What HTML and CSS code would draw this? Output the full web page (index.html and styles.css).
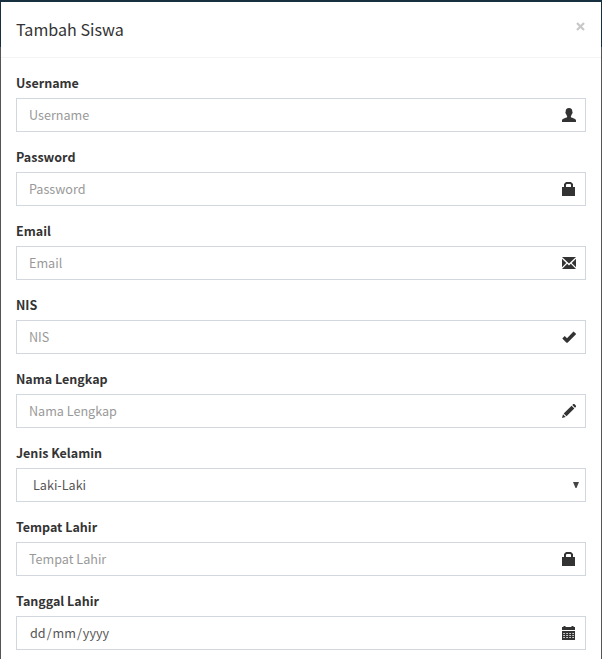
FILE: index.html
```html
<!DOCTYPE html>
<html lang="id">
<head>
<meta charset="utf-8">
<title>Tambah Siswa</title>
<link rel="stylesheet" href="styles.css">
</head>
<body>
<div class="modal">
  <header class="modal-header">
    <h1 class="modal-title">Tambah Siswa</h1>
    <svg class="close" width="9" height="9" viewBox="0 0 9 9"><path d="M1 1l7 7M8 1L1 8"/></svg>
  </header>
  <main class="modal-body">
    <div class="field">
      <div class="label">Username</div>
      <div class="control"><span class="placeholder">Username</span>
        <svg class="icon" viewBox="0 0 14 14"><path d="M7 0C4.700 0 3.600 1.400 3.700 3.500c0 .5-.4.6-.3 1.200.1.700.5.900.7 1.200.2 1 .6 1.700 1 2.200v1.100C4 10 0 10.500 0 12.500V14h14v-1.500c0-2-4-2.500-5.100-3.300V8.100c.4-.5.8-1.200 1-2.200.2-.3.600-.5.700-1.200.1-.6-.3-.7-.3-1.200C10.400 1.400 9.300 0 7 0z"/></svg>
      </div>
    </div>
    <div class="field">
      <div class="label">Password</div>
      <div class="control"><span class="placeholder">Password</span>
        <svg class="icon" viewBox="0 0 14 14"><path fill-rule="evenodd" d="M2 5V2L4 0h5l2 2v3h2v9H0V5zM4 5h5V2.700L8.300 2H4.700L4 2.700z"/></svg>
      </div>
    </div>
    <div class="field">
      <div class="label">Email</div>
      <div class="control"><span class="placeholder">Email</span>
        <svg class="icon" viewBox="0 0 14 14"><path d="M0 1h14L7 7.500zM0 2.700L4.300 7 0 11.300zM14 2.700v8.600L9.700 7zM5.200 7.800L7 9.500l1.800-1.700L14 13H0z"/></svg>
      </div>
    </div>
    <div class="field">
      <div class="label">NIS</div>
      <div class="control"><span class="placeholder">NIS</span>
        <svg class="icon" viewBox="0 0 14 14"><path d="M11.500 1.500L14.200 4 5.500 12.800H4.500L.3 8.500 2.700 6l2.300 2.200z"/></svg>
      </div>
    </div>
    <div class="field">
      <div class="label">Nama Lengkap</div>
      <div class="control"><span class="placeholder">Nama Lengkap</span>
        <svg class="icon" viewBox="0 0 14 14"><path d="M0 14l1-3.700L3.700 13zM1.700 9.600L9.600 1.800l2.700 2.700L4.500 12.300zM10.300 1.100l1-1h1L14 1.800v1l-1 1z"/></svg>
      </div>
    </div>
    <div class="field">
      <div class="label">Jenis Kelamin</div>
      <div class="control select"><span>Laki-Laki</span>
        <svg class="arrow" width="6" height="6" viewBox="0 0 6 6"><path d="M0 0h6L3.500 6h-1z"/></svg>
      </div>
    </div>
    <div class="field">
      <div class="label">Tempat Lahir</div>
      <div class="control"><span class="placeholder">Tempat Lahir</span>
        <svg class="icon" viewBox="0 0 14 14"><path fill-rule="evenodd" d="M2 5V2L4 0h5l2 2v3h2v9H0V5zM4 5h5V2.700L8.300 2H4.700L4 2.700z"/></svg>
      </div>
    </div>
    <div class="field">
      <div class="label">Tanggal Lahir</div>
      <div class="control date"><span>dd<i>/</i>mm<i>/</i>yyyy</span>
        <svg class="icon" viewBox="0 0 14 14"><path fill-rule="evenodd" d="M0 1h1.500V0h2v1h6V0h2v1H13v3H0zM0 5h13v9H0zM1.200 7v.8H3V7zm3 0v.8H6V7zm3 0v.8H9V7zm3 0v.8H12V7zM1.200 9v.8H3V9zm3 0v.8H6V9zm3 0v.8H9V9zm3 0v.8H12V9zM1.200 11v.8H3V11zm3 0v.8H6V11zm3 0v.8H9V11zm3 0v.8H12V11z"/></svg>
      </div>
    </div>
  </main>
</div>
</body>
</html>
```
FILE: styles.css
```css
* { box-sizing: border-box; }
body {
  margin: 0;
  height: 659px;
  overflow: hidden;
  padding: 2px 1px 0;
  background: linear-gradient(#17303f 0 47px, #555 47px);
  font: 12.6px/20px "Source Sans Pro", "Noto Sans CJK SC", sans-serif;
  color: #333;
}
.modal { height: 657px; background: #fff; }
.modal-header {
  height: 56px;
  padding: 0 16px 2px 15px;
  display: flex;
  align-items: center;
  justify-content: space-between;
  border-bottom: 1px solid #f4f4f4;
}
.modal-title { margin: 0; font-size: 16.1px; line-height: 26px; font-weight: 400; }
.close { margin-bottom: 4px; fill: none; stroke: #c8c8c8; stroke-width: 2.2; }
.modal-body { padding: 15px; }
.field { height: 59px; margin-bottom: 15px; }
.label { height: 25px; font-size: 12.5px; font-weight: 700; }
.control {
  height: 34px;
  padding: 0 9px 0 12px;
  border: 1px solid #d2d6de;
  display: flex;
  align-items: center;
  justify-content: space-between;
  color: #555;
}
.placeholder { color: #999; }
.icon { width: 14px; height: 14px; fill: #333; }
.select { padding: 0 6px 0 16px; }
.arrow { fill: #444; }
.date { padding-left: 13px; }
.date i { font-style: normal; padding: 0 1px; }
```
